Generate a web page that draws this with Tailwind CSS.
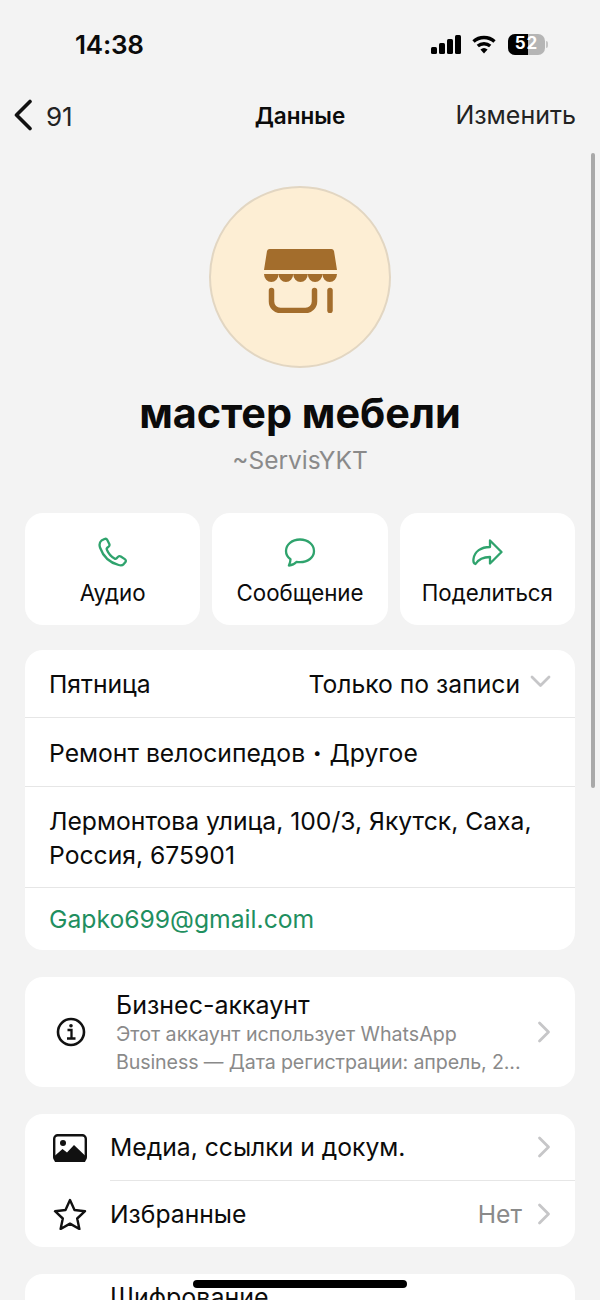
<!DOCTYPE html>
<html lang="ru">
<head>
    <meta charset="UTF-8">
    <meta name="viewport" content="width=device-width, initial-scale=1.0">
    <title>Данные</title>
    <script src="https://cdn.jsdelivr.net/npm/@tailwindcss/browser@4"></script>
</head>
<body class="bg-[#f3f3f3]">
<div class="relative w-[600px] h-[1300px] overflow-hidden bg-[#f3f3f3] text-[#0b0b0b] font-['Inter','Noto_Sans',sans-serif]">

    <!-- status bar -->
    <div class="h-[88px] flex items-center justify-between pl-[75px] pr-[52px]">
        <span class="text-[26px] font-semibold tracking-[-0.2px]">14:38</span>
        <div class="flex items-center">
            <svg width="30" height="19" viewBox="0 0 30 19" fill="#000">
                <rect x="0" y="12" width="6" height="7" rx="1.5"/>
                <rect x="8" y="8" width="6" height="11" rx="1.5"/>
                <rect x="16" y="4" width="6" height="15" rx="1.5"/>
                <rect x="24" y="0" width="6" height="19" rx="1.5"/>
            </svg>
            <svg width="24" height="19" viewBox="0 0 24 19" fill="none" stroke="#000" stroke-width="3.4" class="ml-[11px]">
                <path d="M1.500 6.600C7.400 1.200 16.600 1.200 22.500 6.600"/>
                <path d="M5.800 11C9.300 7.900 14.700 7.900 18.200 11"/>
                <path d="M12 18.500l-3.600-4a5.400 5.400 0 0 1 7.200 0z" fill="#000" stroke="none"/>
            </svg>
            <div class="flex items-center ml-[12px]">
                <div class="relative w-[37px] h-[21px] rounded-[7px] overflow-hidden bg-[#b5b5b5]">
                    <div class="absolute left-0 top-0 bottom-0 w-[20px] bg-black"></div>
                    <span class="absolute inset-0 flex items-center justify-center tracking-[1px] text-[17px] font-bold text-white">52</span>
                </div>
                <div class="w-[2px] h-[7px] rounded-r bg-[#c4c4c4] ml-[1px]"></div>
            </div>
        </div>
    </div>

    <!-- nav -->
    <div class="relative h-[54px] flex items-center justify-between pl-[13px] pr-[24px] pt-[2px]">
        <div class="flex items-center gap-[13px]">
            <svg width="20" height="32" viewBox="0 0 20 32" fill="none" stroke="#111" stroke-width="3.600" stroke-linecap="round" stroke-linejoin="round" class="-mt-[2px]"><path d="M17 2.500L3.500 16 17 29.500"/></svg>
            <span class="text-[26px] text-[#222]">91</span>
        </div>
        <span class="absolute left-0 right-0 text-center text-[22.500px] font-semibold">Данные</span>
        <span class="relative text-[25px] text-[#222]">Изменить</span>
    </div>

    <!-- avatar -->
    <div class="flex justify-center mt-[44px]">
        <div class="w-[182px] h-[182px] rounded-full bg-[#fdeed4] border-2 border-[#e2d6c2] flex items-center justify-center">
            <svg width="73" height="64" viewBox="0 0 73 64" fill="#a36d2c" class="mt-[7px]">
                <path d="M6 0h61a3 3 0 0 1 3 2l3 19H0L3 2a3 3 0 0 1 3-2z"/>
                <path d="M0 25h14.600a7.300 8 0 0 1-14.600 0zM14.600 25h14.600a7.300 8 0 0 1-14.600 0zM29.200 25h14.600a7.300 8 0 0 1-14.600 0zM43.800 25h14.600a7.300 8 0 0 1-14.600 0zM58.400 25H73a7.300 8 0 0 1-14.600 0z"/>
                <path d="M7.500 41.500v11a9 9 0 0 0 9 9h25a9 9 0 0 0 9-9v-11" fill="none" stroke="#a36d2c" stroke-width="5.500" stroke-linecap="round"/>
                <path d="M66 41.500v20" fill="none" stroke="#a36d2c" stroke-width="5.500" stroke-linecap="round"/>
            </svg>
        </div>
    </div>

    <!-- name -->
    <h1 class="mt-[19px] text-center text-[41.400px] leading-[52px] font-bold">мастер мебели</h1>
    <p class="mt-[6px] text-center text-[24.500px] leading-[30px] text-[#8a8a8a]">~ServisYKT</p>

    <!-- actions -->
    <div class="mt-[38px] mx-[25px] grid grid-cols-3 gap-[12px] h-[112px]">
        <div class="bg-white rounded-[18px] flex flex-col items-center pt-[24px]">
            <svg width="32" height="32" viewBox="0 0 32 32" fill="none" stroke="#2fa36d" stroke-width="2.300" stroke-linejoin="round"><path d="M4.500 3.500L7.500 2c1.200-.5 2.300 0 2.800 1l2 4c.4 1 .2 2-.6 2.600L10 11c-.5.5-.5 1 0 2 1.500 3.500 4 6.500 7.500 8.500.8.500 1.400.500 2-.1l1.600-1.600c.8-.8 1.800-.9 2.700-.3l4 2.600c1.100.8 1.400 2 .5 3.100l-1.600 1.900c-1.200 1.300-3 1.500-5 .9C12 25.500 6 19 3 10.500 2.200 8 2.800 5 4.500 3.500z"/></svg>
            <span class="mt-[10px] text-[22.300px] leading-[28px]">Аудио</span>
        </div>
        <div class="bg-white rounded-[18px] flex flex-col items-center pt-[24px]">
            <svg width="32" height="32" viewBox="0 0 32 32" fill="none" stroke="#2fa36d" stroke-width="2.300" stroke-linejoin="round"><path d="M16 2.500C8 2.500 2 7.500 2 14c0 3.500 1.500 6.200 4.500 8.300 0 1.800-.6 4-1.600 6.200 3-.3 5.700-1.600 7.500-3.600 1.200.2 2.400.3 3.600.3 8 0 14-4.800 14-11.200S24 2.500 16 2.500z"/></svg>
            <span class="mt-[10px] text-[22.300px] leading-[28px]">Сообщение</span>
        </div>
        <div class="bg-white rounded-[18px] flex flex-col items-center pt-[24px]">
            <svg width="32" height="32" viewBox="0 0 32 32" fill="none" stroke="#2fa36d" stroke-width="2.300" stroke-linejoin="round"><path d="M19 3.500L30.500 15 19 26.500V20c-6 0-11 1.500-14.500 7C3 26.500 2 25.500 2.500 22 3.500 14.500 10 10 19 10z"/></svg>
            <span class="mt-[10px] text-[22.300px] leading-[28px]">Поделиться</span>
        </div>
    </div>

    <!-- info card -->
    <div class="mt-[25px] mx-[25px] bg-white rounded-[18px] text-[24.700px] h-[300px]">
        <div class="h-[68px] pl-[24px] pr-[24px] pt-[2px] flex items-center justify-between border-b border-[#e6e6e6]">
            <span>Пятница</span>
            <div class="flex items-center gap-[10px]">
                <span>Только по записи</span>
                <svg width="21" height="13" viewBox="0 0 21 13" fill="none" stroke="#c6c6c8" stroke-width="2.800" stroke-linecap="round" stroke-linejoin="round" class="mb-[6px]"><path d="M2 2l8.500 8.500L19 2"/></svg>
            </div>
        </div>
        <div class="h-[69px] pl-[24px] pt-[3px] flex items-center gap-[8px] border-b border-[#e6e6e6]">Ремонт велосипедов <span class="text-[15px]">•</span> Другое</div>
        <div class="h-[101px] pl-[24px] pr-[24px] pt-[1px] flex items-center leading-[34px] border-b border-[#e6e6e6]">Лермонтова улица, 100/3, Якутск, Саха, Россия, 675901</div>
        <div class="h-[62px] pl-[24px] pt-[1px] flex items-center text-[#1f8f5f]">Gapko699@gmail.com</div>
    </div>

    <!-- business card -->
    <div class="mt-[27px] mx-[25px] h-[110px] bg-white rounded-[18px] flex items-center pl-[31px] pr-[24px]">
        <svg width="30" height="30" viewBox="0 0 30 30" fill="none" stroke="#111" stroke-width="2.600" class="shrink-0"><circle cx="15" cy="15" r="13"/><circle cx="15" cy="8.800" r="1.800" fill="#111" stroke="none"/><path d="M11.500 13h4v8.500M11 21.500h8.500" stroke-width="2.300"/></svg>
        <div class="ml-[30px] flex-1 min-w-0 pt-[1px]">
            <div class="text-[25px] leading-[30px]">Бизнес-аккаунт</div>
            <div class="text-[19.650px] leading-[28px] text-[#8a8a8a] whitespace-nowrap">Этот аккаунт использует WhatsApp<br><span class="tracking-[-0.12px]">Business — Дата регистрации: апрель, 2...</span></div>
        </div>
        <svg width="14" height="22" viewBox="0 0 14 22" fill="none" stroke="#c6c6c8" stroke-width="2.800" stroke-linecap="round" stroke-linejoin="round" class="shrink-0 ml-[12px]"><path d="M2.500 2l9 9-9 9"/></svg>
    </div>

    <!-- media card -->
    <div class="mt-[27px] mx-[25px] h-[133px] bg-white rounded-[18px] text-[24.700px]">
        <div class="h-[67px] flex items-center pl-[28px] pr-[24px]">
            <svg width="34" height="28" viewBox="0 0 34 28" class="shrink-0"><rect x="1.200" y="1.200" width="31.600" height="25.600" rx="3.500" fill="#fff" stroke="#111" stroke-width="2.400"/><circle cx="10" cy="9" r="3" fill="#111"/><path d="M1.500 22l8-7 4.500 3.500 7-7.500 11.500 11v4a3 3 0 0 1-3 3H4.500a3 3 0 0 1-3-3z" fill="#111"/></svg>
            <div class="ml-[23px] flex-1 self-stretch flex items-center justify-between border-b border-[#e6e6e6] -mr-[24px] pr-[24px]">
                <span class="pt-[1px]">Медиа, ссылки и докум.</span>
                <svg width="14" height="22" viewBox="0 0 14 22" fill="none" stroke="#c6c6c8" stroke-width="2.800" stroke-linecap="round" stroke-linejoin="round"><path d="M2.500 2l9 9-9 9"/></svg>
            </div>
        </div>
        <div class="h-[66px] flex items-center pl-[28px] pr-[24px]">
            <svg width="34" height="32" viewBox="0 0 34 32" fill="none" stroke="#111" stroke-width="2.400" stroke-linejoin="round" class="shrink-0"><path d="M17 2l4.500 10 10.500 1.200-7.800 7.300 2.200 10.500L17 25.600 7.600 31l2.200-10.500L2 13.200 12.500 12z"/></svg>
            <div class="ml-[23px] flex-1 flex items-center justify-between">
                <span class="pt-[2px]">Избранные</span>
                <div class="flex items-center gap-[15px]">
                    <span class="pt-[2px] text-[#8a8a8a]">Нет</span>
                    <svg width="14" height="22" viewBox="0 0 14 22" fill="none" stroke="#c6c6c8" stroke-width="2.800" stroke-linecap="round" stroke-linejoin="round"><path d="M2.500 2l9 9-9 9"/></svg>
                </div>
            </div>
        </div>
    </div>

    <!-- encryption card, cut off by the screen -->
    <div class="mt-[27px] mx-[25px] h-[110px] bg-white rounded-[18px] pl-[85px] pt-[8px] text-[25px] leading-[30px]">Шифрование</div>

    <!-- scrollbar -->
    <div class="absolute left-[591px] top-[153px] w-[4px] h-[635px] rounded-full bg-[#a9a9a9]"></div>
    <!-- home indicator -->
    <div class="absolute left-[193px] top-[1280px] w-[214px] h-[8px] rounded-full bg-black"></div>
</div>
</body>
</html>
